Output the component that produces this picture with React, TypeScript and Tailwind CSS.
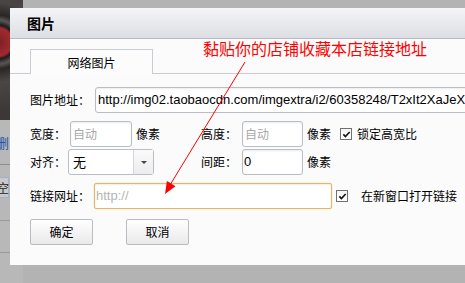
import React from "react";

function Check() {
  return (
    <div className="flex h-[12px] w-[12px] shrink-0 items-center justify-center border border-[#707070] bg-[linear-gradient(#f4f4f4,#ffffff)]">
      <svg viewBox="0 0 10 10" className="h-[9px] w-[9px]">
        <path d="M1.5 4.8 L3.8 7.2 L8.5 2.2" fill="none" stroke="#111" strokeWidth="1.8" />
      </svg>
    </div>
  );
}

const inputCls =
  "flex h-[26px] shrink-0 items-center rounded-[3px] border border-[#b9bdc4] bg-white px-[2px] shadow-[inset_0_1px_2px_rgba(0,0,0,0.08)]";

export default function App() {
  return (
    <div className="relative flex h-[283px] w-[465px] overflow-hidden bg-[#b3b3b3] font-['Noto_Sans_CJK_SC',sans-serif] text-[12px] text-black">
      {/* page behind the dialog */}
      <div className="flex w-[23px] shrink-0 flex-col">
        <div className="h-[120px] bg-[radial-gradient(circle_at_-2px_42px,#7a1f24_0,#a12a30_14px,#1d1b1b_17px,#5a5555_22px,#2a2626_27px,#4b4646_40px,#3c3838_70px)]" />
        <div className="flex flex-1 flex-col bg-[#b8b8b8]">
          <div className="mt-[16px] ml-[-4px] h-[14px] text-[13px] leading-[14px] text-[#1f4fa6]">删</div>
          <div className="mt-[14px] h-px bg-[#8e8e8e]" />
          <div className="mt-[12px] ml-[-4px] h-[21px] w-[13px] border border-[#9fb2cc] bg-[#c9c9c9] text-[12px] leading-[19px] text-[#222]">
            空
          </div>
          <div className="mt-[22px] h-px bg-[#9a9a9a]" />
          <div className="mt-[31px] h-px bg-[#9a9a9a]" />
        </div>
      </div>

      {/* dialog */}
      <div className="absolute left-[10px] top-[8px] flex h-[257px] w-[470px] flex-col bg-[#fbfbfb]">
        <div className="flex h-[31px] items-center border-b border-[#b7bac1] bg-[linear-gradient(#f5f5f7,#dcdee3)] pl-[17px] text-[14px] font-bold">
          图片
        </div>

        <div className="flex flex-col pt-[10px]">
          {/* tabs */}
          <div className="flex h-[25px]">
            <div className="w-[20px] border-b border-[#c9ccd2]" />
            <div className="flex w-[123px] items-center justify-center border-x border-t border-[#c9ccd2] bg-[#fcfcfc] pt-px">
              网络图片
            </div>
            <div className="flex-1 border-b border-[#c9ccd2]" />
          </div>

          <div className="flex flex-col pl-[20px]">
            {/* image url */}
            <div className="mt-[13px] flex h-[26px] items-center">
              <div className="w-[65px] shrink-0">图片地址：</div>
              <div className={`${inputCls} w-[400px] whitespace-nowrap font-['Liberation_Sans',sans-serif] text-[13px]`}>
                http://img02.taobaocdn.com/imgextra/i2/60358248/T2xIt2XaJeXXXXXXXX
              </div>
            </div>

            {/* width / height */}
            <div className="mt-[8px] flex h-[26px] items-center">
              <div className="flex w-[171px] shrink-0 items-center">
                <div className="w-[40px] shrink-0">宽度：</div>
                <div className={`${inputCls} w-[62px] text-[#a8a8a8]`}>自动</div>
                <div className="ml-[4px]">像素</div>
              </div>
              <div className="w-[41px] shrink-0">高度：</div>
              <div className={`${inputCls} w-[61px] text-[#a8a8a8]`}>自动</div>
              <div className="ml-[4px]">像素</div>
              <div className="ml-[9px]">
                <Check />
              </div>
              <div className="ml-[5px]">锁定高宽比</div>
            </div>

            {/* align / spacing */}
            <div className="mt-[2px] flex h-[26px] items-center">
              <div className="flex w-[171px] shrink-0 items-center">
                <div className="w-[38px] shrink-0">对齐：</div>
                <div className="flex h-[26px] w-[86px] shrink-0 items-stretch rounded-[3px] border border-[#b9bdc4] bg-white">
                  <div className="flex flex-1 items-center pl-[4px] text-[13px]">无</div>
                  <div className="flex w-[20px] items-center justify-center border-l border-[#d3d6db] bg-[linear-gradient(#fafafa,#ececec)]">
                    <svg viewBox="0 0 6 3" className="h-[3px] w-[6px]">
                      <path d="M0 0 H6 L3 3 Z" fill="#444" />
                    </svg>
                  </div>
                </div>
              </div>
              <div className="w-[41px] shrink-0">间距：</div>
              <div className={`${inputCls} w-[61px] px-px font-['Liberation_Sans',sans-serif] text-[13px]`}>0</div>
              <div className="ml-[4px]">像素</div>
            </div>

            {/* link url */}
            <div className="mt-[8px] flex h-[26px] items-center">
              <div className="w-[64px] shrink-0">链接网址：</div>
              <div className="flex h-[26px] w-[238px] shrink-0 items-center rounded-[2px] border border-[#e2b663] bg-white px-[1px] font-['Liberation_Sans',sans-serif] text-[13px] text-[#b5b5b5] shadow-[0_0_2px_#f3ddb0,inset_0_1px_2px_rgba(0,0,0,0.08)]">
                http://
              </div>
              <div className="ml-[4px]">
                <Check />
              </div>
              <div className="ml-[13px]">在新窗口打开链接</div>
            </div>

            {/* buttons */}
            <div className="mt-[10px] flex h-[26px] items-center">
              <button className="flex h-[26px] w-[63px] items-center justify-center rounded-[2px] border border-[#b9bdc3] bg-[linear-gradient(#ffffff,#e9e9ea)] text-[12px]">
                确定
              </button>
              <button className="ml-[33px] flex h-[26px] w-[63px] items-center justify-center rounded-[2px] border border-[#b9bdc3] bg-[linear-gradient(#ffffff,#e9e9ea)] text-[12px]">
                取消
              </button>
            </div>
          </div>
        </div>
      </div>

      {/* red annotation */}
      <div className="absolute left-[203px] top-[40px] whitespace-nowrap text-[16px] leading-[16px] text-[#ff0000]">
        黏贴你的店铺收藏本店链接地址
      </div>
      <svg className="pointer-events-none absolute left-0 top-0 h-[283px] w-[465px]" viewBox="0 0 465 283">
        <line x1="245" y1="62" x2="170" y2="185" stroke="#ff0000" strokeWidth="1" />
        <polygon points="165,194 175.5,186.3 166.9,181.1" fill="#ff0000" />
      </svg>
    </div>
  );
}
